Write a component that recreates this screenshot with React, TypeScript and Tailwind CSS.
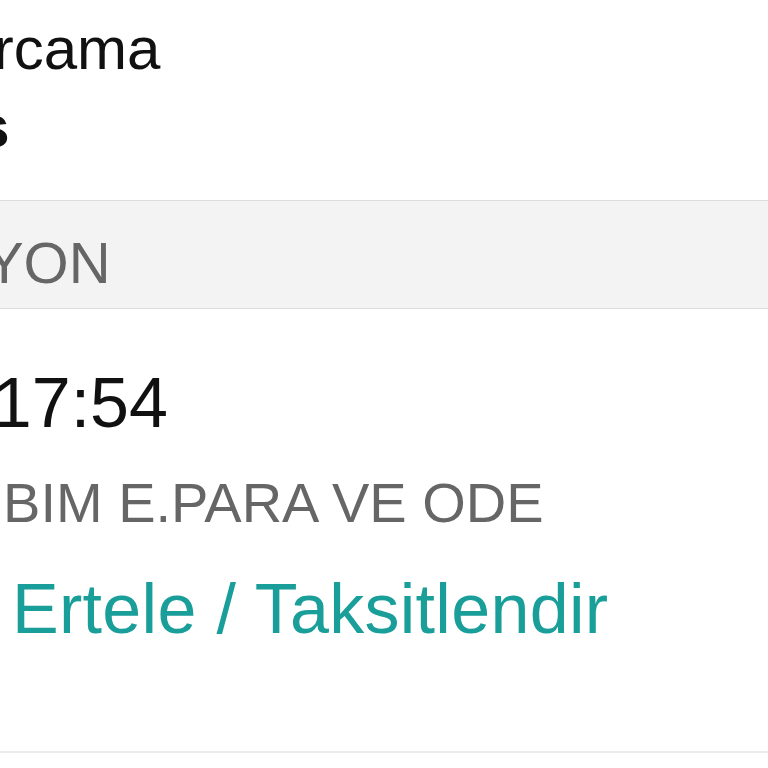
import React from "react";

// Zoomed crop of a card-statement screen: the left side of every line runs off the edge.
export default function App() {
  return (
    <div className="w-[768px] h-[768px] overflow-hidden bg-white font-['Liberation_Sans',Arial,sans-serif]">
      {/* Title block */}
      <div className="h-[200px] pt-[10px]">
        <div className="whitespace-nowrap text-[60px] leading-[78px] text-[#111] ml-[-83px]">Harcama</div>
        <div className="whitespace-nowrap text-[60px] leading-[78px] font-bold text-[#111] ml-[-177px]">Bonus</div>
      </div>

      {/* Section header */}
      <div className="h-[109px] border-y border-[#dcdcdc] bg-[#f3f3f3] pt-[33px]">
        <div className="whitespace-nowrap text-[58px] leading-[58px] text-[#666] ml-[-231px]">PROVİZYON</div>
      </div>

      {/* Transaction row */}
      <div className="pt-[59px]">
        <div className="whitespace-nowrap text-[70px] leading-[70px] text-[#111] ml-[-377px]">12.05.2019 17:54</div>
        <div className="mt-[36px] whitespace-nowrap text-[56px] leading-[58px] text-[#666] ml-[-109px]">PAY.BIM E.PARA VE ODE</div>
        <div className="mt-[42px] whitespace-nowrap text-[70px] leading-[70px] text-[#1a9e9a] pl-[12px] tracking-[0.3px]">Ertele / Taksitlendir</div>
      </div>

      <div className="mt-[107px] border-t-2 border-[#ececec]" />
    </div>
  );
}
